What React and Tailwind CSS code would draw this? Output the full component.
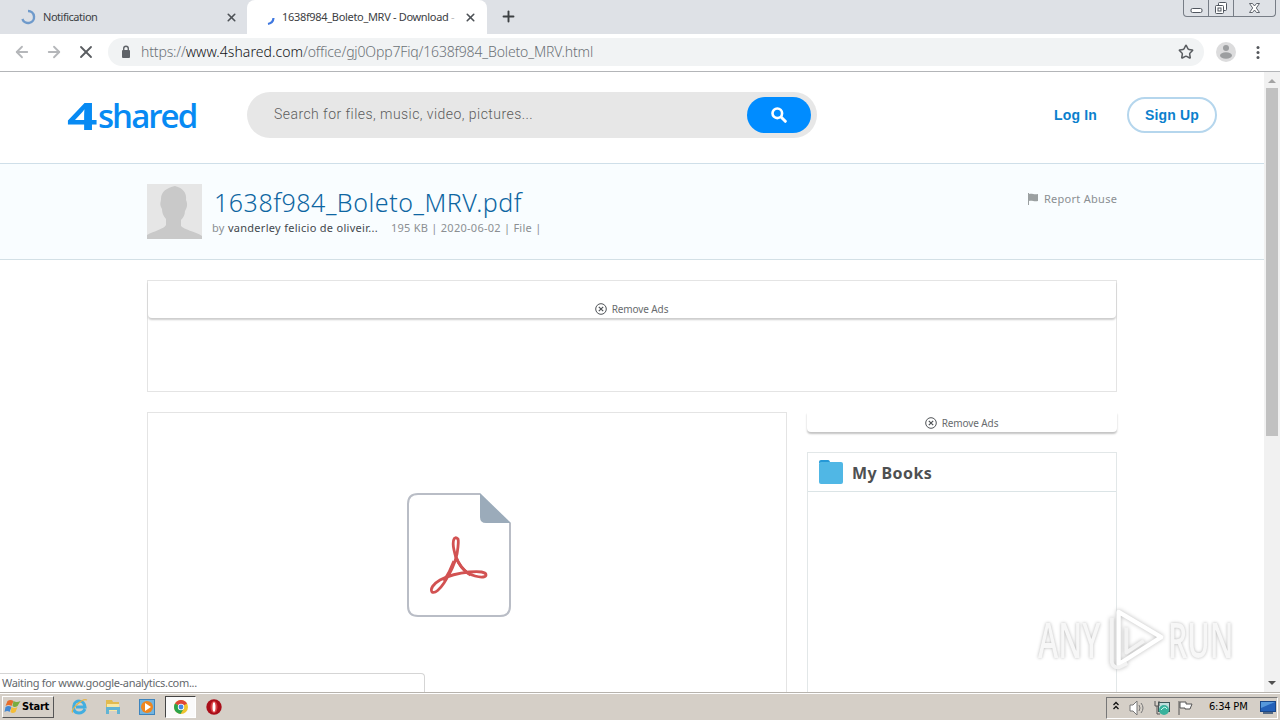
import { ArrowLeft, ArrowRight, Plus, Star, X } from 'lucide-react'

const pageText = "font-['Noto_Sans',sans-serif]"

function Tab({ title, active }) {
  return (
    <div className={active ? 'w-[240px] -ml-px h-[34px] bg-white rounded-t-lg flex items-center' : 'w-[248px] h-[34px] flex items-center'}>
      {active ? (
        <svg className="ml-[14px] w-4 h-4 shrink-0 mt-1" viewBox="0 0 16 16" fill="none">
          <path d="M7 13c4-.8 5.3-3 5.5-6" stroke="#3f78e0" strokeWidth="2.2" />
        </svg>
      ) : (
        <svg className="ml-5 w-4 h-4 shrink-0" viewBox="0 0 16 16" fill="none">
          <path d="M8 2a6 6 0 1 1-5.6 8" stroke="#6f9acb" strokeWidth="2.4" />
        </svg>
      )}
      <span className={active ? 'ml-[5px] w-[176px] text-[11px] tracking-[-0.32px] whitespace-nowrap text-[#3c4043]' : 'ml-[7px] w-[175px] text-[11px] tracking-[-0.48px] text-[#3c4043]'}>
        {title}
        {active && <span className="text-[#b9bbbd]"> -</span>}
      </span>
      <X className={active ? 'ml-[6px] w-[13px] h-[13px] text-[#4d5156]' : 'ml-[7px] w-[13px] h-[13px] text-[#4d5156]'} strokeWidth={3} />
    </div>
  )
}

function WindowButtons() {
  return (
    <div className="ml-auto mr-1 w-[93px] h-[17px] flex border border-t-0 border-[#777d86] rounded-b-[4px] text-[#50565f]">
      <div className="w-[25px] border-r border-[#777d86] flex justify-center">
        <svg width="13" height="15" viewBox="0 0 13 15"><rect x="1" y="8.5" width="11" height="4" rx="1.5" fill="#fff" stroke="currentColor" /></svg>
      </div>
      <div className="w-[25px] border-r border-[#777d86] flex justify-center">
        <svg width="14" height="15" viewBox="0 0 14 15" fill="#fff" stroke="currentColor">
          <rect x="4.5" y="2.5" width="8" height="8" rx="1" />
          <rect x="1.5" y="5.5" width="8" height="8" rx="1" />
          <rect x="4" y="8" width="3" height="3" />
        </svg>
      </div>
      <div className="flex-1 flex justify-center">
        <svg width="13" height="15" viewBox="0 0 13 15" fill="#fff" stroke="currentColor" strokeWidth=".9">
          <path d="M1.5 3.5h3l2 2.5 2-2.5h3L8.3 8l3.2 4.5h-3l-2-2.5-2 2.5h-3L4.7 8z" />
        </svg>
      </div>
    </div>
  )
}

function Toolbar() {
  return (
    <div className="h-[38px] bg-white border-b border-[#b3b5b8] flex items-center pb-[2px]">
      <ArrowLeft className="ml-[13px] w-[18px] h-[18px] text-[#b5b7ba]" strokeWidth={2.4} />
      <ArrowRight className="ml-[14px] w-[18px] h-[18px] text-[#b5b7ba]" strokeWidth={2.4} />
      <X className="ml-[13px] w-5 h-5 text-[#5a5d61]" strokeWidth={2.2} />
      <div className="ml-[12px] w-[1096px] h-[28px] rounded-full bg-[#f1f3f4] flex items-center">
        <svg className="ml-[13px] w-[10px] h-[14px]" viewBox="0 0 10 14" fill="none">
          <rect x="1" y="5" width="8" height="8" rx="1" fill="#5f6368" />
          <path d="M2.7 5V3.5a2.3 2.3 0 0 1 4.6 0V5" stroke="#5f6368" strokeWidth="1.4" />
        </svg>
        <span className="ml-[10px] w-[470px] text-[14px] font-light text-[#6b7176] whitespace-nowrap tracking-[-0.15px]">
          https://<span className="text-[#111417] tracking-[0.06px]">www.4shared.com</span>/office/gj0Opp7Fiq/1638f984_Boleto_MRV.html
        </span>
        <Star className="ml-auto mr-[10px] w-4 h-4 text-[#5a5d61]" strokeWidth={2.3} />
      </div>
      <svg className="ml-[12px] w-5 h-5" viewBox="0 0 20 20">
        <circle cx="10" cy="10" r="10" fill="#dcdcdd" />
        <circle cx="10" cy="6" r="3" fill="#9c9ea0" />
        <ellipse cx="10" cy="13.5" rx="6" ry="3.2" fill="#9c9ea0" />
      </svg>
      <svg className="ml-[20px] w-1 h-4" viewBox="0 0 4 16" fill="#54575b">
        <circle cx="2" cy="3.5" r="1.5" /><circle cx="2" cy="8.5" r="1.5" /><circle cx="2" cy="13.5" r="1.5" />
      </svg>
    </div>
  )
}

function SiteHeader() {
  return (
    <header className="h-[92px] shrink-0 border-b border-[#cfdfe9] flex items-start pt-5">
      <div className="ml-[67px] mt-[3px] w-[130px] h-[42px] text-[#078af3] flex items-start font-['Open_Sans',sans-serif]">
        <span className="w-[31px] h-10 text-[38px] leading-[40px] font-bold"><span className="inline-block origin-left scale-x-[1.4]">4</span></span>
        <span className="text-[33px] leading-[41px] font-semibold tracking-[-1.95px]">shared</span>
      </div>
      <div className="ml-[50px] w-[570px] h-[46px] rounded-full bg-[#e7e7e7] flex items-center">
        <span className="ml-[27px] text-[14px] tracking-[0.45px] text-[#5c5c5c] whitespace-nowrap pb-[2px] font-[Roboto,sans-serif] font-light">Search for files, music, video, pictures...</span>
        <div className="ml-auto mr-[6px] w-[64px] h-9 rounded-full bg-[#008cff] flex items-center justify-center">
          <svg className="w-4 h-4" viewBox="0 0 16 16" fill="none" stroke="#fff" strokeLinecap="round">
            <circle cx="6.3" cy="6.3" r="4.8" strokeWidth="2.6" />
            <path d="M10.3 10.3l4 4" strokeWidth="3" />
          </svg>
        </div>
      </div>
      <div className="ml-[237px] mt-[5px] flex items-center text-[14px] font-bold text-[#0b7fcd] font-['Liberation_Sans',sans-serif]">
        <span className="w-[73px] tracking-[0.15px]">Log In</span>
        <button className="w-[90px] h-9 rounded-full border-2 border-[#b5d6ed] tracking-[0.15px]">Sign Up</button>
      </div>
    </header>
  )
}

function FileBand() {
  return (
    <div className={`h-[96px] shrink-0 bg-[#f9fdff] border-b border-[#d3e0e6] pl-[147px] pt-5 flex items-start ${pageText}`}>
      <svg className="w-[55px] h-[55px] shrink-0" viewBox="0 0 55 55">
        <rect width="55" height="55" fill="#e6e6e6" />
        <path d="M0 55v-4c7-4 17-6 19-10v-6c-3-3-4-7-4-10-3-5-1-7-1-10C14 7 20 4 28 2c8 2 12 7 11 14 2 4 1 8-1 11 0 4-2 7-4 9v6c3 4 14 5 21 10v3z" fill="#c9c9c9" />
      </svg>
      <div className="ml-[10px] w-[815px]">
        <h1 className="ml-[2px] text-[25px] leading-[36px] font-light text-[#0e66a2] whitespace-nowrap tracking-[0.53px]">1638f984_Boleto_MRV.pdf</h1>
        <div className="flex text-[11px] leading-[16px] text-[#8b8f92] whitespace-nowrap">
          <span className="w-[179px] tracking-[0.29px]">by <span className="text-[#43484d]">vanderley felicio de oliveir...</span></span>
          <span className="tracking-[0.26px]">195 KB | 2020-06-02 | File |</span>
        </div>
      </div>
      <svg className="mt-[9px] w-3 h-[13px] shrink-0" viewBox="0 0 12 13" fill="#9ba0a1">
        <path d="M1 0h1v12H1zM2 1c3-1 5 1 9 0v7c-4 1-6-1-9 0z" />
      </svg>
      <span className="ml-[5px] mt-[6px] text-[11px] leading-[18px] text-[#8b8f92] whitespace-nowrap tracking-[0.27px]">Report Abuse</span>
    </div>
  )
}

function RemoveAds() {
  return (
    <div className={`flex items-center justify-center pr-px text-[10px] leading-[14px] text-[#686b6e] tracking-[-0.1px] ${pageText}`}>
      <svg className="w-3 h-3 mr-[5px]" viewBox="0 0 12 12" fill="none" stroke="#4e5256">
        <circle cx="6" cy="6" r="5.3" />
        <path d="M3.8 3.8l4.4 4.4m0-4.4L3.8 8.2" strokeWidth="1.2" />
      </svg>
      Remove Ads
    </div>
  )
}

function PdfIcon() {
  return (
    <svg className="w-[106px] h-[126px]" viewBox="0 0 106 126" fill="none">
      <path d="M74 2H12Q2 2 2 12v102q0 10 10 10h82q10 0 10-10V31" stroke="#b9bdc6" strokeWidth="2" />
      <path d="M74 1v24q0 6 6 6h25z" fill="#9babba" />
      <g stroke="#d25252" strokeLinejoin="round">
        <path d="M52 47c-4-4-6 2-4 11 2 11 9 23 21 26 7 2 11 1 11-1 0-3-6-4-17-3-10 1-21 4-29 8-7 4-10 9-8 12 3 2 8-3 12-9 6-9 11-20 13-29 1-7 2-12 1-15z" strokeWidth="2.8" />
        <path d="M49.5 64c3 8 8 15 15 19" strokeWidth="3" />
        <path d="M48 69c-3 8-6 14-10 20" strokeWidth="3" />
      </g>
    </svg>
  )
}

function Content() {
  return (
    <main className="w-[970px] ml-[147px] pt-5">
      <div className="h-[112px] border border-[#e4e4e4]">
        <div className="h-[37px] pt-[21px] rounded-b-[4px] shadow-[0_2px_2px_rgba(0,0,0,0.2)]"><RemoveAds /></div>
      </div>
      <div className="mt-5 flex gap-5">
        <div className="w-[640px] h-[300px] border border-[#e4e4e4] pl-[258px] pt-[79px]"><PdfIcon /></div>
        <div className="w-[310px]">
          <div className="h-[20px] pt-[4px] rounded-b-[4px] shadow-[0_2px_2px_rgba(0,0,0,0.24)]"><RemoveAds /></div>
          <div className="mt-[20px] h-[260px] border border-[#e2e7e8]">
            <div className="h-[39px] border-b border-[#dbe4e6] flex items-center pl-[11px]">
              <svg className="w-6 h-6" viewBox="0 0 24 24">
                <path d="M0 2q0-2 2-2h7q2 0 2 3H0z" fill="#2598d7" />
                <rect y="2" width="24" height="22" rx="2" fill="#50b7e5" />
              </svg>
              <h2 className={`ml-[9px] pt-[2px] text-[16px] font-bold text-[#4e5051] tracking-[0.4px] ${pageText}`}>My Books</h2>
            </div>
          </div>
        </div>
      </div>
    </main>
  )
}

function Scrollbar() {
  return (
    <div className="w-4 h-full bg-[#f1f1f1] flex flex-col items-center">
      <svg className="h-4 w-4 shrink-0" viewBox="0 0 16 16"><path d="M4 11l4-4 4 4z" fill="#a3a3a3" /></svg>
      <div className="w-[12px] h-[348px] bg-[#c1c1c1]" />
      <svg className="mt-auto h-[18px] w-4 shrink-0" viewBox="0 0 16 18"><path d="M4 7h8l-4 4z" fill="#505050" /></svg>
    </div>
  )
}

function Watermark() {
  return (
    <div className="absolute left-[1038px] top-[534px] w-[200px] h-[68px] flex items-center text-[48px] font-semibold text-[#f7f7f7] font-['Open_Sans',sans-serif] [text-shadow:0_0_4px_#b5b5b5]">
      <span className="w-[68px]"><span className="inline-block origin-left scale-x-[0.64]">ANY</span></span>
      <svg className="w-[62px] h-[66px] shrink-0 drop-shadow-[0_0_2px_#bbb]" viewBox="0 0 64 66" fill="none" stroke="#fff" strokeWidth="4.5" strokeLinejoin="round">
        <path d="M13 4l44 26-44 28z" />
        <path d="M6 10v46q1 6 8 5l8-4M21 20v26l18-12" stroke="#f3f3f3" strokeWidth="4" />
      </svg>
      <span className="inline-block origin-left scale-x-[0.63]">RUN</span>
    </div>
  )
}

function Taskbar() {
  return (
    <div className="h-7 bg-[#d5cfc7] border-t border-[#b7b3ad] shadow-[inset_0_1px_0_#fff] flex items-center font-['DejaVu_Sans_Condensed','DejaVu_Sans',sans-serif] text-black">
      <button className="ml-[2px] mt-[1px] w-[52px] h-[22px] border border-t-white border-l-white border-r-[#555] border-b-[#555] flex items-center text-[11px] font-bold tracking-[-0.2px]">
        <svg className="w-[17px] h-4 mx-[1px] shrink-0" viewBox="0 0 16 16">
          <path d="M3 2q3-2 6 0L7 7Q4 5 1 7z" fill="#e76d2a" />
          <path d="M9 2q3 2 7 0l-3 5q-3 2-5 0z" fill="#79ad3f" />
          <path d="M1 8q3-2 6 0l-2 5q-2-2-5 0z" fill="#4388d2" />
          <path d="M7 8q3 2 6 0l-2 5q-3 2-5 0z" fill="#f4bd37" />
        </svg>
        Start
      </button>
      <svg className="ml-[17px] w-[17px] h-[17px]" viewBox="0 0 17 17" fill="none">
        <path d="M14 11q-2 4-6 4C3 15 2 11 3 7c1-5 10-6 11 2H5" stroke="#42aee0" strokeWidth="3" />
        <path d="M2 14C-2 14 11-1 16 2" stroke="#e5b449" strokeWidth="1.3" />
      </svg>
      <svg className="ml-[17px] w-4 h-4" viewBox="0 0 16 16">
        <path d="M1 3V1h6l1 2h6v7H1z" fill="#e2bb50" /><path d="M2 5h12v7H2z" fill="#f8e8a4" />
        <path d="M1 8h14v7h-3v-4H4v4H1z" fill="#62b4d4" />
      </svg>
      <svg className="ml-[18px] w-4 h-4" viewBox="0 0 16 16">
        <rect x=".5" y=".5" width="15" height="15" fill="#73b4df" stroke="#3d84bd" />
        <circle cx="8" cy="8" r="6" fill="#ef861f" /><path d="M6 4l6 4-6 4z" fill="#fff" />
      </svg>
      <div className="ml-[10px] w-[31px] h-[22px] bg-[#fafafa] border border-t-[#444] border-l-[#444] border-r-white border-b-white flex items-center justify-center">
        <svg className="w-[14px] h-[14px]" viewBox="0 0 14 14">
          <circle cx="7" cy="7" r="7" fill="#efc42e" />
          <path d="M7 7L1 3.5A7 7 0 0 1 13 3.5z" fill="#df4638" />
          <path d="M7 7L1 3.5A7 7 0 0 0 6.5 14l3-5z" fill="#2ba34b" />
          <circle cx="7" cy="7" r="3.2" fill="#fff" /><circle cx="7" cy="7" r="2.4" fill="#4587e4" />
        </svg>
      </div>
      <svg className="ml-[10px] w-4 h-4" viewBox="0 0 16 16">
        <circle cx="8" cy="8" r="7.7" fill="#a90e19" /><ellipse cx="8" cy="8" rx="3.5" ry="6" fill="#da4044" />
        <ellipse cx="8" cy="8" rx="1.5" ry="4.8" fill="#fff" />
      </svg>
      <div className="ml-auto mr-[2px] mt-[2px] w-[172px] h-[22px] border border-t-[#777] border-l-[#777] border-r-white border-b-white flex items-center">
        <svg className="ml-[5px] mb-[3px] w-2 h-3" viewBox="0 0 8 12" fill="none" stroke="#111" strokeWidth="1.3"><path d="M1.5 5L4 2.5 6.5 5m-5 4L4 6.5 6.5 9" /></svg>
        <svg className="ml-[9px] w-[17px] h-4" viewBox="0 0 17 16" fill="#fff" stroke="#777">
          <path d="M1 5h3l4-4v14l-4-4H1z" /><path d="M10 5q2 3 0 6m2-8q4 5 0 10" fill="none" />
        </svg>
        <svg className="ml-[8px] w-4 h-4" viewBox="0 0 16 16">
          <rect x="4.5" y="2.5" width="11" height="9" fill="#bfdedb" stroke="#3d5759" />
          <path d="M1 1v5h4V1M3 6v8h3" fill="none" stroke="#555" />
          <circle cx="10" cy="10" r="5" fill="#38b29c" /><path d="M7 10q4-5 6-1" stroke="#d4fff4" fill="none" />
        </svg>
        <svg className="ml-[7px] w-4 h-4" viewBox="0 0 16 16" fill="#fff" stroke="#555">
          <path d="M2 1v14" /><path d="M3 2h6v2h6l-2 5H8V8H3z" />
        </svg>
        <span className="ml-[16px] w-[42px] text-[11px] tracking-[-0.2px] whitespace-nowrap">6:34 PM</span>
        <svg className="ml-[9px] w-4 h-[14px] shrink-0" viewBox="0 0 16 14">
          <rect x=".5" y=".5" width="15" height="10" fill="#2461b9" stroke="#194789" /><path d="M1 1h14L1 7z" fill="#5698dc" />
          <path d="M3 12h10" stroke="#546984" strokeWidth="2" />
        </svg>
      </div>
    </div>
  )
}

export default function App() {
  return (
    <div className="w-[1280px] h-[720px] overflow-hidden bg-white flex flex-col font-['Noto_Sans',sans-serif]">
      <div className="h-[34px] shrink-0 bg-[#dee1e6] flex items-start">
        <Tab title="Notification" />
        <Tab title="1638f984_Boleto_MRV - Download" active />
        <Plus className="ml-[13px] mt-[8px] w-[17px] h-[17px] text-[#3c4043]" strokeWidth={2.7} />
        <WindowButtons />
      </div>
      <Toolbar />
      <div className="relative h-[620px] shrink-0 flex overflow-hidden">
        <div className="w-[1264px] flex flex-col overflow-hidden">
          <SiteHeader />
          <FileBand />
          <Content />
        </div>
        <Scrollbar />
        <Watermark />
        <div className="absolute left-0 bottom-0 w-[425px] h-[19px] bg-white border border-l-0 border-b-0 border-[#d5d5d5] rounded-tr-[4px] pl-[2px] text-[11px] leading-[18px] text-[#64686c] tracking-[-0.31px]">Waiting for www.google-analytics.com...</div>
      </div>
      <Taskbar />
    </div>
  )
}
